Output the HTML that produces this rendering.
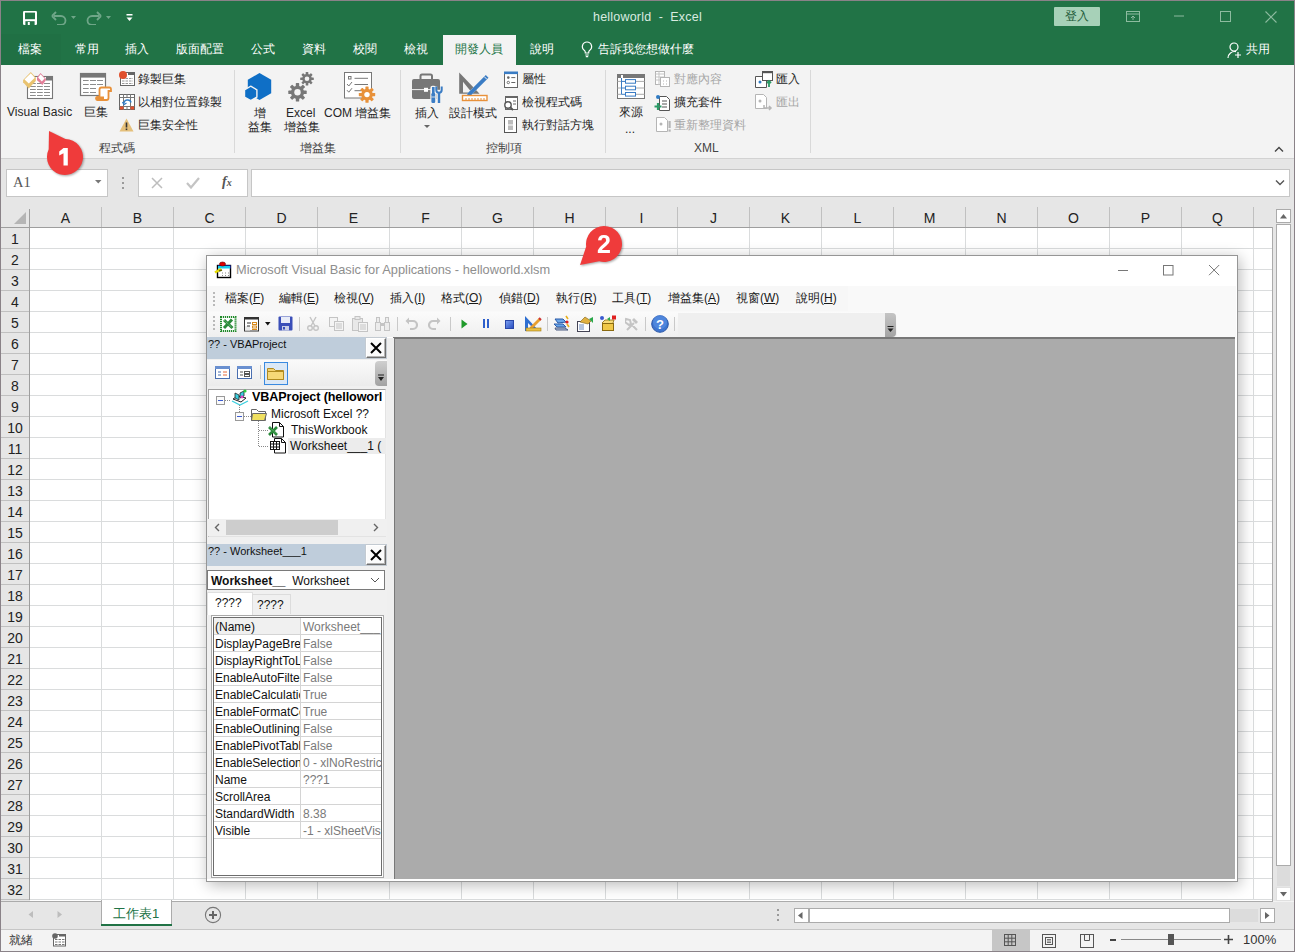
<!DOCTYPE html><html><head><meta charset="utf-8"><style>
*{margin:0;padding:0;box-sizing:border-box}
html,body{width:1295px;height:952px;overflow:hidden;background:#f3f3f3}
body{font-family:"Liberation Sans",sans-serif;position:relative;color:#222}
.a{position:absolute}
.t{position:absolute;white-space:pre;line-height:1}
</style></head><body><div class="a" style="left:0px;top:0px;width:1295px;height:65px;background:#217346"></div>
<svg class="a" style="left:23px;top:11px;" width="15" height="15" viewBox="0 0 15 15"><rect x="0" y="0" width="14" height="14" rx="1.2" fill="#fff"/><rect x="2" y="1.6" width="10" height="6.6" fill="#217346"/><rect x="2.4" y="10.2" width="9.2" height="3.8" fill="#217346"/><rect x="4.8" y="11" width="2" height="3" fill="#fff"/></svg>
<svg class="a" style="left:51px;top:11px;" width="16" height="14" viewBox="0 0 16 14"><path d="M3 5h7a4.5 4.5 0 0 1 0 9H6" fill="none" stroke="#6fa688" stroke-width="1.8"/><path d="M1 5l4-4M1 5l4 4" fill="none" stroke="#6fa688" stroke-width="1.8"/></svg>
<svg class="a" style="left:71px;top:16px;" width="6" height="4" viewBox="0 0 6 4"><path d="M0 0h5l-2.5 3z" fill="#6fa688"/></svg>
<svg class="a" style="left:86px;top:11px;" width="16" height="14" viewBox="0 0 16 14"><path d="M13 5H6a4.5 4.5 0 0 0 0 9h4" fill="none" stroke="#6fa688" stroke-width="1.8"/><path d="M15 5l-4-4M15 5l-4 4" fill="none" stroke="#6fa688" stroke-width="1.8"/></svg>
<svg class="a" style="left:106px;top:16px;" width="6" height="4" viewBox="0 0 6 4"><path d="M0 0h5l-2.5 3z" fill="#6fa688"/></svg>
<svg class="a" style="left:126px;top:14px;" width="7" height="8" viewBox="0 0 7 8"><rect x="0.5" y="0" width="6" height="1.5" fill="#fff"/><path d="M0.5 3.5h6l-3 3.5z" fill="#fff"/></svg>
<div class="t" style="left:593px;top:11px;font-size:12.5px;color:#d9ebe0;letter-spacing:0.2px">helloworld  -  Excel</div>
<div class="a" style="left:1054px;top:7px;width:46px;height:19px;background:#a7d1b8;border-radius:1px"></div>
<div class="t" style="left:1065px;top:10px;font-size:12px;color:#1e5a39;">登入</div>
<svg class="a" style="left:1126px;top:11px;" width="14" height="11" viewBox="0 0 14 11"><rect x="0.5" y="0.5" width="13" height="10" fill="none" stroke="#8dbb9f"/><path d="M0.5 3h13" stroke="#8dbb9f"/><path d="M7 9V5M5 7l2-2 2 2" fill="none" stroke="#8dbb9f"/></svg>
<svg class="a" style="left:1174px;top:15px;" width="11" height="2" viewBox="0 0 11 2"><path d="M0 1h10" stroke="#8dbb9f" stroke-width="1"/></svg>
<svg class="a" style="left:1220px;top:11px;" width="11" height="11" viewBox="0 0 11 11"><rect x="0.5" y="0.5" width="10" height="10" fill="none" stroke="#8dbb9f"/></svg>
<svg class="a" style="left:1265px;top:11px;" width="12" height="12" viewBox="0 0 12 12"><path d="M0.5 0.5l11 11M11.5 0.5l-11 11" stroke="#8dbb9f" stroke-width="1.1"/></svg>
<div class="a" style="left:1px;top:34px;width:60px;height:31px;background:#207044"></div>
<div class="t" style="left:18px;top:43px;font-size:12px;color:#fff;">檔案</div>
<div class="t" style="left:75px;top:43px;font-size:12px;color:#fff;">常用</div>
<div class="t" style="left:125px;top:43px;font-size:12px;color:#fff;">插入</div>
<div class="t" style="left:176px;top:43px;font-size:12px;color:#fff;">版面配置</div>
<div class="t" style="left:251px;top:43px;font-size:12px;color:#fff;">公式</div>
<div class="t" style="left:302px;top:43px;font-size:12px;color:#fff;">資料</div>
<div class="t" style="left:353px;top:43px;font-size:12px;color:#fff;">校閱</div>
<div class="t" style="left:404px;top:43px;font-size:12px;color:#fff;">檢視</div>
<div class="t" style="left:530px;top:43px;font-size:12px;color:#fff;">說明</div>
<div class="a" style="left:443px;top:35px;width:73px;height:30px;background:#f3f3f3"></div>
<div class="t" style="left:455px;top:43px;font-size:12px;color:#217346;">開發人員</div>
<svg class="a" style="left:581px;top:41px;" width="12" height="17" viewBox="0 0 12 17"><path d="M6 1a4.6 4.6 0 0 0-2.6 8.4c.6.5.9 1.2.9 2V12h3.4v-.6c0-.8.3-1.5.9-2A4.6 4.6 0 0 0 6 1z" fill="none" stroke="#fff" stroke-width="1.2"/><path d="M4.3 14h3.4M4.8 15.6h2.4" stroke="#fff" stroke-width="1.1"/></svg>
<div class="t" style="left:598px;top:43px;font-size:12px;color:#fff;">告訴我您想做什麼</div>
<svg class="a" style="left:1227px;top:42px;" width="15" height="17" viewBox="0 0 15 17"><circle cx="7" cy="5" r="4" fill="none" stroke="#fff" stroke-width="1.2"/><path d="M1 16a6.5 6.5 0 0 1 8-6.3" fill="none" stroke="#fff" stroke-width="1.2"/><path d="M11 10v6M8 13h6" stroke="#fff" stroke-width="1.2"/></svg>
<div class="t" style="left:1246px;top:43px;font-size:12px;color:#fff;">共用</div>
<div class="a" style="left:1px;top:65px;width:1293px;height:93px;background:#f3f3f3"></div>
<div class="a" style="left:1px;top:158px;width:1293px;height:1px;background:#d2d2d2"></div>
<div class="a" style="left:234px;top:70px;width:1px;height:83px;background:#d9d9d9"></div>
<div class="a" style="left:400px;top:70px;width:1px;height:83px;background:#d9d9d9"></div>
<div class="a" style="left:605px;top:70px;width:1px;height:83px;background:#d9d9d9"></div>
<div class="a" style="left:810px;top:70px;width:1px;height:83px;background:#d9d9d9"></div>
<div class="t" style="left:99px;top:142px;font-size:12px;color:#444;">程式碼</div>
<div class="t" style="left:300px;top:142px;font-size:12px;color:#444;">增益集</div>
<div class="t" style="left:486px;top:142px;font-size:12px;color:#444;">控制項</div>
<div class="t" style="left:694px;top:142px;font-size:12px;color:#444;">XML</div>
<svg class="a" style="left:22px;top:71px;" width="34" height="30" viewBox="0 0 34 30">
<rect x="5.5" y="5.5" width="25" height="22" fill="#fff" stroke="#777" stroke-width="1.1"/>
<rect x="24" y="5" width="7" height="4.5" fill="#777"/>
<path d="M8 12.5h5.8M15 12.5h5.8M22 12.5h6M8 15.5h5.8M15 15.5h5.8M22 15.5h6M8 18.5h5.8M15 18.5h5.8M22 18.5h6M8 21.5h5.8M15 21.5h5.8M22 21.5h6M8 24.5h5.8M15 24.5h5.8M22 24.5h6" stroke="#8c8c8c" stroke-width="1"/>
<path d="M8.8 1L13.8 6.6V10L6.7 17.4L1.1 11.2V9z" fill="#e9c370"/>
<path d="M8.8 2.2L12.8 6.8L6.8 12.6L2.5 8.6z" fill="#fff"/>
<path d="M18.5 2.1L23.9 7.7V9.3L20.4 14L15 9.2V6.2z" fill="#e37f99"/>
<path d="M18.6 3.2L22.6 7.6L19.8 10.6L16.2 6.6z" fill="#fff"/>
</svg>
<div class="t" style="left:7px;top:106px;font-size:12px;color:#262626;">Visual Basic</div>
<svg class="a" style="left:79px;top:72px;" width="34" height="30" viewBox="0 0 34 30">
<rect x="1.5" y="1.5" width="25" height="22" fill="#fff" stroke="#777" stroke-width="1.2"/>
<rect x="1" y="1" width="26" height="4.6" fill="#777"/>
<path d="M4 8.5h5.7M11 8.5h6M18 8.5h6M4 12.5h5.7M11 12.5h6M18 12.5h6M4 16.5h5.7M11 16.5h6M4 20.5h5.7M11 20.5h6" stroke="#8c8c8c"/>
<path d="M20.5 17.5Q20.5 15.5 22.5 15.5H30.5Q32 15.5 32 17.5V19H29.5V26Q29.5 28 27.5 28H18.5Q17 28 17 26.5Q17 24.8 18.5 24.8H20.5z" fill="#fff" stroke="#e8913a" stroke-width="1.8"/>
<path d="M17 25.5Q17 24.5 18.5 24.5H25V28.5H18.5Q17 28.5 17 27z" fill="#e8913a"/>
</svg>
<div class="t" style="left:84px;top:106px;font-size:12px;color:#262626;">巨集</div>
<svg class="a" style="left:119px;top:71px;" width="16" height="16" viewBox="0 0 16 16"><rect x="1.5" y="1.5" width="14" height="13" fill="#fff" stroke="#666"/><rect x="9" y="1" width="7" height="3" fill="#666"/>
<path d="M3 7.5h11M3 10h11M3 12.5h11" stroke="#999" stroke-dasharray="2.5 1"/><circle cx="4" cy="4" r="4" fill="#e0502e"/></svg>
<div class="t" style="left:138px;top:73px;font-size:12px;color:#262626;">錄製巨集</div>
<svg class="a" style="left:119px;top:94px;" width="16" height="17" viewBox="0 0 16 17"><rect x="0.5" y="0.5" width="15" height="15" fill="#fff" stroke="#666"/>
<path d="M0.5 3.5h15M0.5 12.5h15M4.5 0v16M8 0v4M8 12v4M11.5 0v16" stroke="#777"/>
<path d="M5 9.5a3.5 3 0 0 1 7-1" fill="none" stroke="#2f7bc4" stroke-width="1.5"/><path d="M3.5 8l1.5 2.5 2.5-1.5" fill="none" stroke="#2f7bc4" stroke-width="1.3"/>
<rect x="1" y="12.5" width="3.5" height="3" fill="#e0502e"/><rect x="11.5" y="12.5" width="3.5" height="3" fill="#e0502e"/></svg>
<div class="t" style="left:138px;top:96px;font-size:12px;color:#262626;">以相對位置錄製</div>
<svg class="a" style="left:119px;top:118px;" width="15" height="14" viewBox="0 0 15 14"><path d="M7.5 0.5L14.5 13.5H0.5z" fill="#e5c07b"/><rect x="6.7" y="4.5" width="1.6" height="5" fill="#333"/><rect x="6.7" y="10.5" width="1.6" height="1.6" fill="#333"/></svg>
<div class="t" style="left:138px;top:119px;font-size:12px;color:#262626;">巨集安全性</div>
<svg class="a" style="left:244px;top:72px;" width="28" height="29" viewBox="0 0 28 29"><path d="M15.5 1l11.7 6.75v13.5L15.5 28 3.8 21.25V7.75z" fill="#0f6fc6"/>
<path d="M6.7 14.2l6.2 3.6v7.2L6.7 28.6 0.5 25v-7.2z" fill="#0f6fc6" stroke="#f3f3f3" stroke-width="1.4"/></svg>
<div class="t" style="left:254px;top:107px;font-size:12px;color:#262626;">增</div>
<div class="t" style="left:248px;top:121px;font-size:12px;color:#262626;">益集</div>
<svg class="a" style="left:287px;top:70px;" width="30" height="32" viewBox="0 0 30 32"><circle cx="10.5" cy="22.3" r="6.6" fill="#777"/><rect x="8.8" y="13.100000000000001" width="3.4" height="3.6" rx="0.6" fill="#777" transform="rotate(0.0 10.5 22.3)"/><rect x="8.8" y="13.100000000000001" width="3.4" height="3.6" rx="0.6" fill="#777" transform="rotate(45.0 10.5 22.3)"/><rect x="8.8" y="13.100000000000001" width="3.4" height="3.6" rx="0.6" fill="#777" transform="rotate(90.0 10.5 22.3)"/><rect x="8.8" y="13.100000000000001" width="3.4" height="3.6" rx="0.6" fill="#777" transform="rotate(135.0 10.5 22.3)"/><rect x="8.8" y="13.100000000000001" width="3.4" height="3.6" rx="0.6" fill="#777" transform="rotate(180.0 10.5 22.3)"/><rect x="8.8" y="13.100000000000001" width="3.4" height="3.6" rx="0.6" fill="#777" transform="rotate(225.0 10.5 22.3)"/><rect x="8.8" y="13.100000000000001" width="3.4" height="3.6" rx="0.6" fill="#777" transform="rotate(270.0 10.5 22.3)"/><rect x="8.8" y="13.100000000000001" width="3.4" height="3.6" rx="0.6" fill="#777" transform="rotate(315.0 10.5 22.3)"/><circle cx="10.5" cy="22.3" r="3.2" fill="#f3f3f3"/><circle cx="20" cy="8.7" r="4.8" fill="#777"/><rect x="18.7" y="1.8999999999999995" width="2.6" height="3" rx="0.6" fill="#777" transform="rotate(0.0 20 8.7)"/><rect x="18.7" y="1.8999999999999995" width="2.6" height="3" rx="0.6" fill="#777" transform="rotate(45.0 20 8.7)"/><rect x="18.7" y="1.8999999999999995" width="2.6" height="3" rx="0.6" fill="#777" transform="rotate(90.0 20 8.7)"/><rect x="18.7" y="1.8999999999999995" width="2.6" height="3" rx="0.6" fill="#777" transform="rotate(135.0 20 8.7)"/><rect x="18.7" y="1.8999999999999995" width="2.6" height="3" rx="0.6" fill="#777" transform="rotate(180.0 20 8.7)"/><rect x="18.7" y="1.8999999999999995" width="2.6" height="3" rx="0.6" fill="#777" transform="rotate(225.0 20 8.7)"/><rect x="18.7" y="1.8999999999999995" width="2.6" height="3" rx="0.6" fill="#777" transform="rotate(270.0 20 8.7)"/><rect x="18.7" y="1.8999999999999995" width="2.6" height="3" rx="0.6" fill="#777" transform="rotate(315.0 20 8.7)"/><circle cx="20" cy="8.7" r="2.3" fill="#f3f3f3"/></svg>
<div class="t" style="left:286px;top:107px;font-size:12px;color:#262626;">Excel</div>
<div class="t" style="left:284px;top:121px;font-size:12px;color:#262626;">增益集</div>
<svg class="a" style="left:343px;top:71px;" width="34" height="32" viewBox="0 0 34 32"><rect x="1.5" y="1.5" width="27" height="25.5" fill="#fff" stroke="#777"/><rect x="5.5" y="5.5" width="2.5" height="2.5" fill="none" stroke="#777"/><path d="M11.5 7.3h13.5M11.5 13.5h13.5M11.5 19.7h6.5" stroke="#777"/><path d="M4 13l1.8 2L9 11M4 19.2l1.8 2L9 17.2" fill="none" stroke="#777"/><circle cx="24" cy="23.6" r="5.8" fill="#e8913a"/><rect x="22.4" y="15.4" width="3.2" height="3.4" rx="0.6" fill="#e8913a" transform="rotate(0.0 24 23.6)"/><rect x="22.4" y="15.4" width="3.2" height="3.4" rx="0.6" fill="#e8913a" transform="rotate(45.0 24 23.6)"/><rect x="22.4" y="15.4" width="3.2" height="3.4" rx="0.6" fill="#e8913a" transform="rotate(90.0 24 23.6)"/><rect x="22.4" y="15.4" width="3.2" height="3.4" rx="0.6" fill="#e8913a" transform="rotate(135.0 24 23.6)"/><rect x="22.4" y="15.4" width="3.2" height="3.4" rx="0.6" fill="#e8913a" transform="rotate(180.0 24 23.6)"/><rect x="22.4" y="15.4" width="3.2" height="3.4" rx="0.6" fill="#e8913a" transform="rotate(225.0 24 23.6)"/><rect x="22.4" y="15.4" width="3.2" height="3.4" rx="0.6" fill="#e8913a" transform="rotate(270.0 24 23.6)"/><rect x="22.4" y="15.4" width="3.2" height="3.4" rx="0.6" fill="#e8913a" transform="rotate(315.0 24 23.6)"/><circle cx="24" cy="23.6" r="2.7" fill="#fff"/></svg>
<div class="t" style="left:324px;top:107px;font-size:12px;color:#262626;">COM 增益集</div>
<svg class="a" style="left:411px;top:72px;" width="34" height="33" viewBox="0 0 34 33"><path d="M9.5 7.5V4Q9.5 2.5 11 2.5H19.5Q21 2.5 21 4V7.5" fill="none" stroke="#777" stroke-width="2"/>
<rect x="1" y="7" width="28" height="20" rx="2" fill="#777"/>
<path d="M1 17.6H21" stroke="#f3f3f3" stroke-width="1"/><rect x="13" y="15.8" width="4" height="4" fill="#fff"/>
<g stroke="#f3f3f3" stroke-width="2.4" fill="#f3f3f3"><rect x="20.5" y="15" width="3.5" height="16" rx="1"/><rect x="26.5" y="19" width="3" height="12"/><path d="M25 14.5V18Q25 21 28 21Q31 21 31 18V14.5" fill="none"/></g>
<rect x="21" y="15" width="2.6" height="8" fill="#3a7cc4"/><rect x="20.4" y="21" width="3.8" height="10" rx="1.2" fill="#3a7cc4"/><path d="M20.4 25h3.8" stroke="#f3f3f3" stroke-width="0.8"/>
<rect x="26.8" y="20" width="2.4" height="11" fill="#3a7cc4"/><path d="M25.3 14.5V18Q25.3 20.7 28 20.7Q30.7 20.7 30.7 18V14.5" fill="none" stroke="#3a7cc4" stroke-width="2"/>
</svg>
<div class="t" style="left:415px;top:107px;font-size:12px;color:#262626;">插入</div>
<svg class="a" style="left:424px;top:125px;" width="7" height="4" viewBox="0 0 7 4"><path d="M0 0h6l-3 3z" fill="#666"/></svg>
<svg class="a" style="left:458px;top:70px;" width="32" height="32" viewBox="0 0 32 32"><path d="M1.2 2.5V23.8H21.6z" fill="#777"/><path d="M5 11.8V22.4H13.7z" fill="#f3f3f3"/>
<path d="M9 23.8L28.5 4.3 31.2 7 11.7 26.5 7.8 27.8z" fill="#f3f3f3"/>
<path d="M9.6 23.2L27.8 5 30.5 7.7 12.3 25.9 8.8 26.8z" fill="#3a7cc4"/><path d="M26.2 6.6l2.7 2.7" stroke="#f3f3f3" stroke-width="1"/>
<rect x="4.5" y="25.5" width="24.5" height="5" fill="#fff" stroke="#e8913a" stroke-width="1.4"/><path d="M8 30v-2M11 30v-2M14 30v-2M17 30v-2M20 30v-2M23 30v-2M26 30v-2" stroke="#e8913a" stroke-width="1"/>
</svg>
<div class="t" style="left:449px;top:107px;font-size:12px;color:#262626;">設計模式</div>
<svg class="a" style="left:503px;top:71px;" width="15" height="17" viewBox="0 0 15 17"><rect x="1.5" y="1.5" width="13" height="15" fill="#fff" stroke="#666"/><rect x="1" y="0.5" width="14" height="2.6" fill="#3a7cc4"/><circle cx="5.3" cy="6.6" r="1.3" fill="#666"/><circle cx="5.3" cy="11.5" r="1.2" fill="none" stroke="#666" stroke-width="0.9"/><path d="M8.3 6.6h4M8.3 11.5h4" stroke="#666"/></svg>
<div class="t" style="left:522px;top:73px;font-size:12px;color:#262626;">屬性</div>
<svg class="a" style="left:502px;top:94px;" width="16" height="17" viewBox="0 0 16 17"><rect x="3.5" y="2.5" width="12" height="13" fill="#fff" stroke="#666"/><rect x="3" y="2" width="13" height="2" fill="#666"/><path d="M11 7h3M11 10h3" stroke="#666"/><circle cx="6" cy="11" r="3.2" fill="#fff" stroke="#555" stroke-width="1.4"/><path d="M8 13l3 3" stroke="#555" stroke-width="1.8"/></svg>
<div class="t" style="left:522px;top:96px;font-size:12px;color:#262626;">檢視程式碼</div>
<svg class="a" style="left:503px;top:117px;" width="15" height="17" viewBox="0 0 15 17"><rect x="1.5" y="0.5" width="12" height="15" fill="#fff" stroke="#555"/><rect x="5" y="3" width="5" height="10" fill="#bbb"/><path d="M5 8h5" stroke="#fff"/></svg>
<div class="t" style="left:522px;top:119px;font-size:12px;color:#262626;">執行對話方塊</div>
<svg class="a" style="left:616px;top:73px;" width="30" height="29" viewBox="0 0 30 29"><rect x="1.5" y="1.5" width="27" height="24" fill="#fff" stroke="#777"/><rect x="7" y="1" width="22" height="4" fill="#777"/><rect x="1" y="1" width="4" height="4" fill="#777"/>
<path d="M1.5 8.4h4M1.5 15h4M1.5 21.3h4M19.5 8.4h9M19.5 15h9M19.5 21.3h9" stroke="#aaa"/>
<path d="M5.5 5v16.3M5.5 8.4h4M5.5 15h4M5.5 21.3h4" stroke="#3a7cc4" fill="none"/>
<rect x="9.5" y="6.6" width="10" height="3.6" fill="#fff" stroke="#3a7cc4"/><rect x="9.5" y="13.2" width="10" height="3.6" fill="#fff" stroke="#3a7cc4"/><rect x="9.5" y="19.5" width="10" height="3.6" fill="#fff" stroke="#3a7cc4"/>
</svg>
<div class="t" style="left:619px;top:106px;font-size:12px;color:#262626;">來源</div>
<div class="t" style="left:625px;top:123px;font-size:12px;color:#262626;">...</div>
<svg class="a" style="left:655px;top:71px;" width="15" height="16" viewBox="0 0 15 16"><rect x="0.5" y="0.5" width="9" height="13" fill="#fff" stroke="#b5b5b5"/><path d="M0.5 3h9M0.5 6h9M0.5 9h9M4 0v14" stroke="#c5c5c5"/><rect x="5.5" y="6.5" width="9" height="9" fill="#fff" stroke="#b5b5b5"/><path d="M8 10h1M11 10h1M8 13h1M11 13h1" stroke="#b5b5b5"/></svg>
<div class="t" style="left:674px;top:73px;font-size:12px;color:#a6a6a6;">對應內容</div>
<svg class="a" style="left:654px;top:94px;" width="17" height="17" viewBox="0 0 17 17"><path d="M5.5 2.5h7l3 3v11h-10z" fill="#fff" stroke="#555"/><path d="M8 7h5M8 10h5M8 13h5" stroke="#555"/><circle cx="4" cy="3" r="2" fill="#2f7bc4"/><path d="M4 9v7M0.5 12.5h7" stroke="#2b9a66" stroke-width="2.2"/></svg>
<div class="t" style="left:674px;top:96px;font-size:12px;color:#262626;">擴充套件</div>
<svg class="a" style="left:656px;top:117px;" width="16" height="16" viewBox="0 0 16 16"><path d="M0.5 0.5h8l3 3v11h-11z" fill="#fff" stroke="#b5b5b5"/><circle cx="5" cy="7" r="1.5" fill="#b5b5b5"/><rect x="12.5" y="4" width="2.2" height="7" fill="#b5b5b5"/><rect x="12.5" y="12.5" width="2.2" height="2.2" fill="#b5b5b5"/></svg>
<div class="t" style="left:674px;top:119px;font-size:12px;color:#a6a6a6;">重新整理資料</div>
<svg class="a" style="left:755px;top:71px;" width="18" height="17" viewBox="0 0 18 17"><path d="M0.5 5.5h8l3 3v8h-11z" fill="#fff" stroke="#555"/><circle cx="5" cy="11" r="1.5" fill="#2f7bc4"/><rect x="7.5" y="0.5" width="10" height="9" fill="#fff" stroke="#555"/><rect x="7" y="0" width="11" height="2.2" fill="#555"/><path d="M14 16V10M12 12l2-2 2 2" stroke="#2b9a66" stroke-width="1.8" fill="none"/></svg>
<div class="t" style="left:776px;top:73px;font-size:12px;color:#262626;">匯入</div>
<svg class="a" style="left:755px;top:94px;" width="18" height="17" viewBox="0 0 18 17"><path d="M0.5 0.5h8l3 3v11h-11z" fill="#fff" stroke="#b5b5b5"/><circle cx="5" cy="7" r="1.5" fill="#b5b5b5"/><path d="M9 11v3h7M14 12l2 2-2 2" stroke="#b5b5b5" stroke-width="1.5" fill="none"/></svg>
<div class="t" style="left:776px;top:96px;font-size:12px;color:#a6a6a6;">匯出</div>
<svg class="a" style="left:1274px;top:146px;" width="10" height="7" viewBox="0 0 10 7"><path d="M1 5.5l4-4 4 4" fill="none" stroke="#444" stroke-width="1.4"/></svg>
<div class="a" style="left:1px;top:159px;width:1293px;height:48px;background:#e6e6e6"></div>
<div class="a" style="left:6px;top:169px;width:102px;height:28px;background:#fff;border:1px solid #c6c6c6"></div>
<div class="t" style="left:13px;top:175px;font-size:14.5px;color:#555;font-family:Liberation Serif,serif">A1</div>
<svg class="a" style="left:95px;top:180px;" width="7" height="4" viewBox="0 0 7 4"><path d="M0 0h6.5l-3.25 3.5z" fill="#777"/></svg>
<div class="a" style="left:122px;top:177px;width:2px;height:2px;background:#9a9a9a"></div>
<div class="a" style="left:122px;top:182px;width:2px;height:2px;background:#9a9a9a"></div>
<div class="a" style="left:122px;top:187px;width:2px;height:2px;background:#9a9a9a"></div>
<div class="a" style="left:138px;top:169px;width:110px;height:28px;background:#fff;border:1px solid #c6c6c6"></div>
<svg class="a" style="left:151px;top:177px;" width="12" height="12" viewBox="0 0 12 12"><path d="M1 1l10 10M11 1L1 11" stroke="#bdbdbd" stroke-width="1.5"/></svg>
<svg class="a" style="left:186px;top:177px;" width="14" height="12" viewBox="0 0 14 12"><path d="M1 6l4 4.5L13 1" fill="none" stroke="#c4c4c4" stroke-width="2.2"/></svg>
<div class="t" style="left:222px;top:175px;font-size:14px;color:#555;font-family:Liberation Serif,serif;font-weight:bold"><i>f</i><span style="font-size:10px"><i>x</i></span></div>
<div class="a" style="left:251px;top:169px;width:1039px;height:28px;background:#fff;border:1px solid #c6c6c6"></div>
<svg class="a" style="left:1275px;top:179px;" width="10" height="7" viewBox="0 0 10 7"><path d="M1 1.5l4 4 4-4" fill="none" stroke="#555" stroke-width="1.4"/></svg>
<div class="a" style="left:1px;top:207px;width:1293px;height:694px;background:#e6e6e6"></div>
<div class="a" style="left:1px;top:228px;width:29px;height:672px;background:#e6e6e6"></div>
<div class="a" style="left:30px;top:228px;width:1242px;height:673px;background:#fff"></div>
<svg class="a" style="left:13px;top:212px;" width="14" height="13" viewBox="0 0 14 13"><path d="M13 0v12H1z" fill="#b5b5b5"/></svg>
<div class="a" style="left:101px;top:228px;width:1px;height:672px;background:#dadcdd"></div><div class="a" style="left:101px;top:207px;width:1px;height:20px;background:#c0c0c0"></div><div class="a" style="left:173px;top:228px;width:1px;height:672px;background:#dadcdd"></div><div class="a" style="left:173px;top:207px;width:1px;height:20px;background:#c0c0c0"></div><div class="a" style="left:245px;top:228px;width:1px;height:672px;background:#dadcdd"></div><div class="a" style="left:245px;top:207px;width:1px;height:20px;background:#c0c0c0"></div><div class="a" style="left:317px;top:228px;width:1px;height:672px;background:#dadcdd"></div><div class="a" style="left:317px;top:207px;width:1px;height:20px;background:#c0c0c0"></div><div class="a" style="left:389px;top:228px;width:1px;height:672px;background:#dadcdd"></div><div class="a" style="left:389px;top:207px;width:1px;height:20px;background:#c0c0c0"></div><div class="a" style="left:461px;top:228px;width:1px;height:672px;background:#dadcdd"></div><div class="a" style="left:461px;top:207px;width:1px;height:20px;background:#c0c0c0"></div><div class="a" style="left:533px;top:228px;width:1px;height:672px;background:#dadcdd"></div><div class="a" style="left:533px;top:207px;width:1px;height:20px;background:#c0c0c0"></div><div class="a" style="left:605px;top:228px;width:1px;height:672px;background:#dadcdd"></div><div class="a" style="left:605px;top:207px;width:1px;height:20px;background:#c0c0c0"></div><div class="a" style="left:677px;top:228px;width:1px;height:672px;background:#dadcdd"></div><div class="a" style="left:677px;top:207px;width:1px;height:20px;background:#c0c0c0"></div><div class="a" style="left:749px;top:228px;width:1px;height:672px;background:#dadcdd"></div><div class="a" style="left:749px;top:207px;width:1px;height:20px;background:#c0c0c0"></div><div class="a" style="left:821px;top:228px;width:1px;height:672px;background:#dadcdd"></div><div class="a" style="left:821px;top:207px;width:1px;height:20px;background:#c0c0c0"></div><div class="a" style="left:893px;top:228px;width:1px;height:672px;background:#dadcdd"></div><div class="a" style="left:893px;top:207px;width:1px;height:20px;background:#c0c0c0"></div><div class="a" style="left:965px;top:228px;width:1px;height:672px;background:#dadcdd"></div><div class="a" style="left:965px;top:207px;width:1px;height:20px;background:#c0c0c0"></div><div class="a" style="left:1037px;top:228px;width:1px;height:672px;background:#dadcdd"></div><div class="a" style="left:1037px;top:207px;width:1px;height:20px;background:#c0c0c0"></div><div class="a" style="left:1109px;top:228px;width:1px;height:672px;background:#dadcdd"></div><div class="a" style="left:1109px;top:207px;width:1px;height:20px;background:#c0c0c0"></div><div class="a" style="left:1181px;top:228px;width:1px;height:672px;background:#dadcdd"></div><div class="a" style="left:1181px;top:207px;width:1px;height:20px;background:#c0c0c0"></div><div class="a" style="left:1253px;top:228px;width:1px;height:672px;background:#dadcdd"></div><div class="a" style="left:1253px;top:207px;width:1px;height:20px;background:#c0c0c0"></div><div class="a" style="left:30px;top:248px;width:1242px;height:1px;background:#dadcdd"></div><div class="a" style="left:1px;top:248px;width:28px;height:1px;background:#c0c0c0"></div><div class="a" style="left:30px;top:269px;width:1242px;height:1px;background:#dadcdd"></div><div class="a" style="left:1px;top:269px;width:28px;height:1px;background:#c0c0c0"></div><div class="a" style="left:30px;top:290px;width:1242px;height:1px;background:#dadcdd"></div><div class="a" style="left:1px;top:290px;width:28px;height:1px;background:#c0c0c0"></div><div class="a" style="left:30px;top:311px;width:1242px;height:1px;background:#dadcdd"></div><div class="a" style="left:1px;top:311px;width:28px;height:1px;background:#c0c0c0"></div><div class="a" style="left:30px;top:332px;width:1242px;height:1px;background:#dadcdd"></div><div class="a" style="left:1px;top:332px;width:28px;height:1px;background:#c0c0c0"></div><div class="a" style="left:30px;top:353px;width:1242px;height:1px;background:#dadcdd"></div><div class="a" style="left:1px;top:353px;width:28px;height:1px;background:#c0c0c0"></div><div class="a" style="left:30px;top:374px;width:1242px;height:1px;background:#dadcdd"></div><div class="a" style="left:1px;top:374px;width:28px;height:1px;background:#c0c0c0"></div><div class="a" style="left:30px;top:395px;width:1242px;height:1px;background:#dadcdd"></div><div class="a" style="left:1px;top:395px;width:28px;height:1px;background:#c0c0c0"></div><div class="a" style="left:30px;top:416px;width:1242px;height:1px;background:#dadcdd"></div><div class="a" style="left:1px;top:416px;width:28px;height:1px;background:#c0c0c0"></div><div class="a" style="left:30px;top:437px;width:1242px;height:1px;background:#dadcdd"></div><div class="a" style="left:1px;top:437px;width:28px;height:1px;background:#c0c0c0"></div><div class="a" style="left:30px;top:458px;width:1242px;height:1px;background:#dadcdd"></div><div class="a" style="left:1px;top:458px;width:28px;height:1px;background:#c0c0c0"></div><div class="a" style="left:30px;top:479px;width:1242px;height:1px;background:#dadcdd"></div><div class="a" style="left:1px;top:479px;width:28px;height:1px;background:#c0c0c0"></div><div class="a" style="left:30px;top:500px;width:1242px;height:1px;background:#dadcdd"></div><div class="a" style="left:1px;top:500px;width:28px;height:1px;background:#c0c0c0"></div><div class="a" style="left:30px;top:521px;width:1242px;height:1px;background:#dadcdd"></div><div class="a" style="left:1px;top:521px;width:28px;height:1px;background:#c0c0c0"></div><div class="a" style="left:30px;top:542px;width:1242px;height:1px;background:#dadcdd"></div><div class="a" style="left:1px;top:542px;width:28px;height:1px;background:#c0c0c0"></div><div class="a" style="left:30px;top:563px;width:1242px;height:1px;background:#dadcdd"></div><div class="a" style="left:1px;top:563px;width:28px;height:1px;background:#c0c0c0"></div><div class="a" style="left:30px;top:584px;width:1242px;height:1px;background:#dadcdd"></div><div class="a" style="left:1px;top:584px;width:28px;height:1px;background:#c0c0c0"></div><div class="a" style="left:30px;top:605px;width:1242px;height:1px;background:#dadcdd"></div><div class="a" style="left:1px;top:605px;width:28px;height:1px;background:#c0c0c0"></div><div class="a" style="left:30px;top:626px;width:1242px;height:1px;background:#dadcdd"></div><div class="a" style="left:1px;top:626px;width:28px;height:1px;background:#c0c0c0"></div><div class="a" style="left:30px;top:647px;width:1242px;height:1px;background:#dadcdd"></div><div class="a" style="left:1px;top:647px;width:28px;height:1px;background:#c0c0c0"></div><div class="a" style="left:30px;top:668px;width:1242px;height:1px;background:#dadcdd"></div><div class="a" style="left:1px;top:668px;width:28px;height:1px;background:#c0c0c0"></div><div class="a" style="left:30px;top:689px;width:1242px;height:1px;background:#dadcdd"></div><div class="a" style="left:1px;top:689px;width:28px;height:1px;background:#c0c0c0"></div><div class="a" style="left:30px;top:710px;width:1242px;height:1px;background:#dadcdd"></div><div class="a" style="left:1px;top:710px;width:28px;height:1px;background:#c0c0c0"></div><div class="a" style="left:30px;top:731px;width:1242px;height:1px;background:#dadcdd"></div><div class="a" style="left:1px;top:731px;width:28px;height:1px;background:#c0c0c0"></div><div class="a" style="left:30px;top:752px;width:1242px;height:1px;background:#dadcdd"></div><div class="a" style="left:1px;top:752px;width:28px;height:1px;background:#c0c0c0"></div><div class="a" style="left:30px;top:773px;width:1242px;height:1px;background:#dadcdd"></div><div class="a" style="left:1px;top:773px;width:28px;height:1px;background:#c0c0c0"></div><div class="a" style="left:30px;top:794px;width:1242px;height:1px;background:#dadcdd"></div><div class="a" style="left:1px;top:794px;width:28px;height:1px;background:#c0c0c0"></div><div class="a" style="left:30px;top:815px;width:1242px;height:1px;background:#dadcdd"></div><div class="a" style="left:1px;top:815px;width:28px;height:1px;background:#c0c0c0"></div><div class="a" style="left:30px;top:836px;width:1242px;height:1px;background:#dadcdd"></div><div class="a" style="left:1px;top:836px;width:28px;height:1px;background:#c0c0c0"></div><div class="a" style="left:30px;top:857px;width:1242px;height:1px;background:#dadcdd"></div><div class="a" style="left:1px;top:857px;width:28px;height:1px;background:#c0c0c0"></div><div class="a" style="left:30px;top:878px;width:1242px;height:1px;background:#dadcdd"></div><div class="a" style="left:1px;top:878px;width:28px;height:1px;background:#c0c0c0"></div><div class="a" style="left:30px;top:899px;width:1242px;height:1px;background:#dadcdd"></div><div class="a" style="left:1px;top:899px;width:28px;height:1px;background:#c0c0c0"></div>
<div class="a" style="left:29px;top:209px;width:1px;height:691px;background:#9e9e9e"></div>
<div class="a" style="left:1px;top:227px;width:1271px;height:1px;background:#9e9e9e"></div>
<div class="a" style="left:1272px;top:227px;width:1px;height:674px;background:#ababab"></div>
<div class="a" style="left:1px;top:901px;width:1272px;height:1px;background:#ababab"></div>
<div class="t" style="left:30px;top:211px;width:71px;text-align:center;font-size:14px;color:#222">A</div>
<div class="t" style="left:102px;top:211px;width:71px;text-align:center;font-size:14px;color:#222">B</div>
<div class="t" style="left:174px;top:211px;width:71px;text-align:center;font-size:14px;color:#222">C</div>
<div class="t" style="left:246px;top:211px;width:71px;text-align:center;font-size:14px;color:#222">D</div>
<div class="t" style="left:318px;top:211px;width:71px;text-align:center;font-size:14px;color:#222">E</div>
<div class="t" style="left:390px;top:211px;width:71px;text-align:center;font-size:14px;color:#222">F</div>
<div class="t" style="left:462px;top:211px;width:71px;text-align:center;font-size:14px;color:#222">G</div>
<div class="t" style="left:534px;top:211px;width:71px;text-align:center;font-size:14px;color:#222">H</div>
<div class="t" style="left:606px;top:211px;width:71px;text-align:center;font-size:14px;color:#222">I</div>
<div class="t" style="left:678px;top:211px;width:71px;text-align:center;font-size:14px;color:#222">J</div>
<div class="t" style="left:750px;top:211px;width:71px;text-align:center;font-size:14px;color:#222">K</div>
<div class="t" style="left:822px;top:211px;width:71px;text-align:center;font-size:14px;color:#222">L</div>
<div class="t" style="left:894px;top:211px;width:71px;text-align:center;font-size:14px;color:#222">M</div>
<div class="t" style="left:966px;top:211px;width:71px;text-align:center;font-size:14px;color:#222">N</div>
<div class="t" style="left:1038px;top:211px;width:71px;text-align:center;font-size:14px;color:#222">O</div>
<div class="t" style="left:1110px;top:211px;width:71px;text-align:center;font-size:14px;color:#222">P</div>
<div class="t" style="left:1182px;top:211px;width:71px;text-align:center;font-size:14px;color:#222">Q</div>
<div class="t" style="left:1px;top:232px;width:28px;text-align:center;font-size:14px;color:#222">1</div>
<div class="t" style="left:1px;top:253px;width:28px;text-align:center;font-size:14px;color:#222">2</div>
<div class="t" style="left:1px;top:274px;width:28px;text-align:center;font-size:14px;color:#222">3</div>
<div class="t" style="left:1px;top:295px;width:28px;text-align:center;font-size:14px;color:#222">4</div>
<div class="t" style="left:1px;top:316px;width:28px;text-align:center;font-size:14px;color:#222">5</div>
<div class="t" style="left:1px;top:337px;width:28px;text-align:center;font-size:14px;color:#222">6</div>
<div class="t" style="left:1px;top:358px;width:28px;text-align:center;font-size:14px;color:#222">7</div>
<div class="t" style="left:1px;top:379px;width:28px;text-align:center;font-size:14px;color:#222">8</div>
<div class="t" style="left:1px;top:400px;width:28px;text-align:center;font-size:14px;color:#222">9</div>
<div class="t" style="left:1px;top:421px;width:28px;text-align:center;font-size:14px;color:#222">10</div>
<div class="t" style="left:1px;top:442px;width:28px;text-align:center;font-size:14px;color:#222">11</div>
<div class="t" style="left:1px;top:463px;width:28px;text-align:center;font-size:14px;color:#222">12</div>
<div class="t" style="left:1px;top:484px;width:28px;text-align:center;font-size:14px;color:#222">13</div>
<div class="t" style="left:1px;top:505px;width:28px;text-align:center;font-size:14px;color:#222">14</div>
<div class="t" style="left:1px;top:526px;width:28px;text-align:center;font-size:14px;color:#222">15</div>
<div class="t" style="left:1px;top:547px;width:28px;text-align:center;font-size:14px;color:#222">16</div>
<div class="t" style="left:1px;top:568px;width:28px;text-align:center;font-size:14px;color:#222">17</div>
<div class="t" style="left:1px;top:589px;width:28px;text-align:center;font-size:14px;color:#222">18</div>
<div class="t" style="left:1px;top:610px;width:28px;text-align:center;font-size:14px;color:#222">19</div>
<div class="t" style="left:1px;top:631px;width:28px;text-align:center;font-size:14px;color:#222">20</div>
<div class="t" style="left:1px;top:652px;width:28px;text-align:center;font-size:14px;color:#222">21</div>
<div class="t" style="left:1px;top:673px;width:28px;text-align:center;font-size:14px;color:#222">22</div>
<div class="t" style="left:1px;top:694px;width:28px;text-align:center;font-size:14px;color:#222">23</div>
<div class="t" style="left:1px;top:715px;width:28px;text-align:center;font-size:14px;color:#222">24</div>
<div class="t" style="left:1px;top:736px;width:28px;text-align:center;font-size:14px;color:#222">25</div>
<div class="t" style="left:1px;top:757px;width:28px;text-align:center;font-size:14px;color:#222">26</div>
<div class="t" style="left:1px;top:778px;width:28px;text-align:center;font-size:14px;color:#222">27</div>
<div class="t" style="left:1px;top:799px;width:28px;text-align:center;font-size:14px;color:#222">28</div>
<div class="t" style="left:1px;top:820px;width:28px;text-align:center;font-size:14px;color:#222">29</div>
<div class="t" style="left:1px;top:841px;width:28px;text-align:center;font-size:14px;color:#222">30</div>
<div class="t" style="left:1px;top:862px;width:28px;text-align:center;font-size:14px;color:#222">31</div>
<div class="t" style="left:1px;top:883px;width:28px;text-align:center;font-size:14px;color:#222">32</div>
<div class="a" style="left:1276px;top:209px;width:15px;height:14px;background:#fff;border:1px solid #ababab"></div>
<svg class="a" style="left:1280px;top:214px;" width="8" height="5" viewBox="0 0 8 5"><path d="M0 4.5h7L3.5 0z" fill="#666"/></svg>
<div class="a" style="left:1276px;top:224px;width:15px;height:642px;background:#fff;border:1px solid #ababab"></div>
<div class="a" style="left:1277px;top:866px;width:13px;height:20px;background:#dcdcdc"></div>
<div class="a" style="left:1276px;top:887px;width:15px;height:14px;background:#fff;border:1px solid #e0e0e0"></div>
<svg class="a" style="left:1280px;top:892px;" width="8" height="5" viewBox="0 0 8 5"><path d="M0 0h7L3.5 4.5z" fill="#666"/></svg>
<div class="a" style="left:1px;top:902px;width:1293px;height:27px;background:#e6e6e6"></div>
<div class="a" style="left:1px;top:929px;width:1293px;height:1px;background:#c6c6c6"></div>
<svg class="a" style="left:28px;top:911px;" width="6" height="8" viewBox="0 0 6 8"><path d="M5 0v7L0.5 3.5z" fill="#bdbdbd"/></svg>
<svg class="a" style="left:57px;top:911px;" width="6" height="8" viewBox="0 0 6 8"><path d="M0.5 0v7L5 3.5z" fill="#bdbdbd"/></svg>
<div class="a" style="left:101px;top:900px;width:71px;height:25px;background:#fff;border-left:1px solid #ababab;border-right:1px solid #ababab"></div>
<div class="a" style="left:101px;top:924px;width:71px;height:2px;background:#217346"></div>
<div class="t" style="left:113px;top:907px;font-size:13px;color:#217346;">工作表1</div>
<svg class="a" style="left:204px;top:906px;" width="18" height="18" viewBox="0 0 18 18"><circle cx="9" cy="9" r="7.6" fill="none" stroke="#777" stroke-width="1.1"/><path d="M9 5v8M5 9h8" stroke="#666" stroke-width="2"/></svg>
<div class="a" style="left:777px;top:909px;width:2px;height:2px;background:#9a9a9a"></div>
<div class="a" style="left:777px;top:914px;width:2px;height:2px;background:#9a9a9a"></div>
<div class="a" style="left:777px;top:919px;width:2px;height:2px;background:#9a9a9a"></div>
<div class="a" style="left:794px;top:908px;width:15px;height:15px;background:#fff;border:1px solid #ababab"></div>
<svg class="a" style="left:798px;top:912px;" width="5" height="7" viewBox="0 0 5 7"><path d="M4.5 0v7L0 3.5z" fill="#666"/></svg>
<div class="a" style="left:809px;top:908px;width:421px;height:15px;background:#fff;border:1px solid #ababab"></div>
<div class="a" style="left:1230px;top:909px;width:28px;height:13px;background:#dcdcdc"></div>
<div class="a" style="left:1260px;top:908px;width:15px;height:15px;background:#fff;border:1px solid #ababab"></div>
<svg class="a" style="left:1265px;top:912px;" width="5" height="7" viewBox="0 0 5 7"><path d="M0 0v7L4.5 3.5z" fill="#666"/></svg>
<div class="a" style="left:1px;top:930px;width:1293px;height:21px;background:#f3f3f3"></div>
<div class="t" style="left:9px;top:934px;font-size:12px;color:#333;">就緒</div>
<svg class="a" style="left:52px;top:933px;" width="15" height="14" viewBox="0 0 15 14"><rect x="1.5" y="1.5" width="12" height="11.5" fill="#fff" stroke="#666"/><rect x="7" y="1" width="7" height="2.5" fill="#666"/><path d="M3 6.5h2.5M6.5 6.5h2.5M10 6.5h2.5M3 9h2.5M6.5 9h2.5M10 9h2.5M3 11.5h2.5M6.5 11.5h2.5M10 11.5h2.5" stroke="#777"/><circle cx="3" cy="3" r="2.8" fill="#666"/></svg>
<div class="a" style="left:992px;top:930px;width:38px;height:21px;background:#c6c6c6"></div>
<svg class="a" style="left:1004px;top:934px;" width="12" height="12" viewBox="0 0 12 12"><rect x="0.5" y="0.5" width="11" height="11" fill="none" stroke="#555"/><path d="M4.2 0v12M7.8 0v12M0 4.2h12M0 7.8h12" stroke="#555"/></svg>
<svg class="a" style="left:1042px;top:934px;" width="14" height="14" viewBox="0 0 14 14"><rect x="0.5" y="0.5" width="13" height="13" fill="none" stroke="#555"/><rect x="3.5" y="3.5" width="7" height="7" fill="none" stroke="#555"/><path d="M5 5.5h4M5 7h4M5 8.5h4" stroke="#555" stroke-width="0.8"/></svg>
<svg class="a" style="left:1080px;top:934px;" width="14" height="14" viewBox="0 0 14 14"><rect x="0.5" y="0.5" width="13" height="13" fill="none" stroke="#555"/><path d="M4.5 0.5v6h5v-6" fill="none" stroke="#555"/></svg>
<div class="a" style="left:1110px;top:939px;width:6px;height:2px;background:#444"></div>
<div class="a" style="left:1121px;top:939px;width:100px;height:1px;background:#888"></div>
<div class="a" style="left:1168px;top:934px;width:6px;height:11px;background:#555"></div>
<svg class="a" style="left:1223px;top:934px;" width="11" height="11" viewBox="0 0 11 11"><path d="M5.5 1v9M1 5.5h9" stroke="#444" stroke-width="1.6"/></svg>
<div class="t" style="left:1243px;top:933px;font-size:13px;color:#333;">100%</div>
<div class="a" style="left:206px;top:255px;width:1032px;height:627px;background:#fff;border:1px solid #969696;box-shadow:2px 3px 14px rgba(0,0,0,0.28)"></div>
<svg class="a" style="left:213px;top:261px;" width="20" height="18" viewBox="0 0 20 18"><rect x="4.5" y="4.5" width="13" height="12" fill="#fff" stroke="#000" stroke-width="1.4"/><rect x="5" y="5" width="12" height="2.5" fill="#19d0f0"/><path d="M5 4.5h12.5v3" fill="none" stroke="#1a2a9a" stroke-width="0.8"/><path d="M9 12h1M12 12h1M15 12h1M9 14.5h1M12 14.5h1M15 14.5h1" stroke="#888"/><ellipse cx="9.5" cy="3" rx="3" ry="2" fill="#e00000" stroke="#600" stroke-width="0.6"/><path d="M2 11.5l6-3.5" stroke="#e6dc00" stroke-width="2.6"/><path d="M6 10l3-1" stroke="#6a6a00" stroke-width="1.4"/></svg>
<div class="t" style="left:236px;top:264px;font-size:12.8px;color:#8e8e8e;">Microsoft Visual Basic for Applications - helloworld.xlsm</div>
<svg class="a" style="left:1118px;top:269px;" width="11" height="3" viewBox="0 0 11 3"><path d="M0 1.5h10" stroke="#777"/></svg>
<svg class="a" style="left:1163px;top:265px;" width="11" height="11" viewBox="0 0 11 11"><rect x="0.5" y="0.5" width="9.5" height="9.5" fill="none" stroke="#777"/></svg>
<svg class="a" style="left:1208px;top:264px;" width="12" height="12" viewBox="0 0 12 12"><path d="M1 1l10.2 10.2M11.2 1L1 11.2" stroke="#777"/></svg>
<div class="a" style="left:207px;top:286px;width:1029px;height:51px;background:#f9f9f9"></div>
<div class="a" style="left:207px;top:286px;width:641px;height:25px;background:#f7f7f7"></div>
<div class="a" style="left:213px;top:292px;width:2px;height:2px;background:#b9b9b9"></div>
<div class="a" style="left:213px;top:296px;width:2px;height:2px;background:#b9b9b9"></div>
<div class="a" style="left:213px;top:300px;width:2px;height:2px;background:#b9b9b9"></div>
<div class="a" style="left:213px;top:304px;width:2px;height:2px;background:#b9b9b9"></div>
<div class="t" style="left:225px;top:292px;font-size:12px;color:#1a1a1a;">檔案(<u>F</u>)</div>
<div class="t" style="left:279px;top:292px;font-size:12px;color:#1a1a1a;">編輯(<u>E</u>)</div>
<div class="t" style="left:334px;top:292px;font-size:12px;color:#1a1a1a;">檢視(<u>V</u>)</div>
<div class="t" style="left:390px;top:292px;font-size:12px;color:#1a1a1a;">插入(<u>I</u>)</div>
<div class="t" style="left:441px;top:292px;font-size:12px;color:#1a1a1a;">格式(<u>O</u>)</div>
<div class="t" style="left:499px;top:292px;font-size:12px;color:#1a1a1a;">偵錯(<u>D</u>)</div>
<div class="t" style="left:556px;top:292px;font-size:12px;color:#1a1a1a;">執行(<u>R</u>)</div>
<div class="t" style="left:612px;top:292px;font-size:12px;color:#1a1a1a;">工具(<u>T</u>)</div>
<div class="t" style="left:668px;top:292px;font-size:12px;color:#1a1a1a;">增益集(<u>A</u>)</div>
<div class="t" style="left:736px;top:292px;font-size:12px;color:#1a1a1a;">視窗(<u>W</u>)</div>
<div class="t" style="left:796px;top:292px;font-size:12px;color:#1a1a1a;">說明(<u>H</u>)</div>
<div class="a" style="left:208px;top:312px;width:689px;height:25px;background:linear-gradient(#fbfbfb,#efefef);border-radius:3px"></div>
<div class="a" style="left:213px;top:316px;width:2px;height:2px;background:#b9b9b9"></div>
<div class="a" style="left:213px;top:320px;width:2px;height:2px;background:#b9b9b9"></div>
<div class="a" style="left:213px;top:324px;width:2px;height:2px;background:#b9b9b9"></div>
<div class="a" style="left:213px;top:328px;width:2px;height:2px;background:#b9b9b9"></div>
<svg class="a" style="left:220px;top:316px;" width="17" height="16" viewBox="0 0 17 16"><rect x="1" y="1" width="14.5" height="14" fill="#fff" stroke="#1f8a2a" stroke-width="2" stroke-dasharray="1.2 0.8"/><path d="M4 4l8.5 8M12 3.5l-8 8.5" stroke="#2a8a3a" stroke-width="3"/><path d="M4.5 4.5l7.5 7" stroke="#b8e0b8" stroke-width="0.8" stroke-dasharray="1 1"/></svg>
<svg class="a" style="left:244px;top:317px;" width="15" height="15" viewBox="0 0 15 15"><rect x="0.5" y="0.5" width="14" height="13.5" fill="#fff" stroke="#333"/><rect x="0" y="0" width="15" height="2.5" fill="#333"/><rect x="1" y="9" width="5" height="4.5" fill="#eaeaea"/><path d="M3 6h4M3 9h3" stroke="#333"/><rect x="8.5" y="5.5" width="4" height="2" fill="none" stroke="#d88a1c"/><rect x="8.5" y="9" width="4" height="2" fill="none" stroke="#d88a1c"/><path d="M8 12.5h5" stroke="#d88a1c"/></svg>
<svg class="a" style="left:265px;top:322px;" width="6" height="4" viewBox="0 0 6 4"><path d="M0 0h5.5L2.75 3.5z" fill="#111"/></svg>
<svg class="a" style="left:278px;top:316px;" width="15" height="15" viewBox="0 0 15 15"><rect x="0.5" y="0.5" width="14" height="14" rx="1" fill="#3b4fb8"/><rect x="3" y="1" width="9" height="6" fill="#e8ecf8"/><rect x="4" y="10" width="7" height="4.5" fill="#c9cfe6"/><rect x="5" y="11" width="2" height="2.5" fill="#3b4fb8"/></svg>
<div class="a" style="left:299px;top:317px;width:1px;height:14px;background:#c9c9c9"></div>
<svg class="a" style="left:307px;top:316px;" width="12" height="16" viewBox="0 0 12 16"><circle cx="3" cy="12" r="2.3" fill="none" stroke="#c4c4c4" stroke-width="1.4"/><circle cx="9" cy="12" r="2.3" fill="none" stroke="#c4c4c4" stroke-width="1.4"/><path d="M4 10L9 1M8 10L3 1" stroke="#c4c4c4" stroke-width="1.4"/></svg>
<svg class="a" style="left:329px;top:317px;" width="16" height="14" viewBox="0 0 16 14"><rect x="0.5" y="0.5" width="8" height="9" fill="#f4f4f4" stroke="#c4c4c4"/><rect x="5.5" y="4.5" width="9" height="9" fill="#f4f4f4" stroke="#c4c4c4"/><path d="M7 7h6M7 9h6M7 11h6" stroke="#c4c4c4"/></svg>
<svg class="a" style="left:352px;top:316px;" width="17" height="16" viewBox="0 0 17 16"><rect x="0.5" y="2.5" width="10" height="12" fill="#e8e8e8" stroke="#c4c4c4"/><rect x="3" y="0.5" width="5" height="3" fill="#e8e8e8" stroke="#c4c4c4"/><rect x="6.5" y="6.5" width="9" height="9" fill="#f4f4f4" stroke="#c4c4c4"/><path d="M8 9h6M8 11h6M8 13h6" stroke="#c4c4c4"/></svg>
<svg class="a" style="left:374px;top:316px;" width="17" height="16" viewBox="0 0 17 16"><rect x="1.5" y="6.5" width="5" height="8" fill="#ececec" stroke="#c4c4c4"/><rect x="10.5" y="6.5" width="5" height="8" fill="#ececec" stroke="#c4c4c4"/><rect x="2.5" y="1.5" width="3" height="5" fill="#ececec" stroke="#c4c4c4"/><rect x="11.5" y="1.5" width="3" height="5" fill="#ececec" stroke="#c4c4c4"/><rect x="6" y="7" width="5" height="3" fill="#c4c4c4"/></svg>
<div class="a" style="left:397px;top:317px;width:1px;height:14px;background:#c9c9c9"></div>
<svg class="a" style="left:405px;top:317px;" width="13" height="14" viewBox="0 0 13 14"><path d="M3 4h5a4 4 0 0 1 0 8H5" fill="none" stroke="#c4c4c4" stroke-width="2.2"/><path d="M0.5 4L4 0.5v7z" fill="#c4c4c4"/></svg>
<svg class="a" style="left:428px;top:317px;" width="13" height="14" viewBox="0 0 13 14"><path d="M10 4H5a4 4 0 0 0 0 8h3" fill="none" stroke="#c4c4c4" stroke-width="2.2"/><path d="M12.5 4L9 0.5v7z" fill="#c4c4c4"/></svg>
<div class="a" style="left:450px;top:317px;width:1px;height:14px;background:#c9c9c9"></div>
<svg class="a" style="left:461px;top:319px;" width="7" height="10" viewBox="0 0 7 10"><path d="M0.5 0.5v9l6-4.5z" fill="#1f9a2a"/></svg>
<div class="a" style="left:483px;top:319px;width:2px;height:9px;background:#2d5fcc"></div>
<div class="a" style="left:487px;top:319px;width:2px;height:9px;background:#2d5fcc"></div>
<div class="a" style="left:505px;top:320px;width:9px;height:9px;background:linear-gradient(135deg,#7a9ef0,#2a4fc0);border:1px solid #2a47a8"></div>
<svg class="a" style="left:524px;top:315px;" width="18" height="17" viewBox="0 0 18 17"><path d="M1 1v15h14z" fill="#2f6fd1"/><path d="M4 8v5h5z" fill="#f5f5f5"/><path d="M6 12L15 3l2 2-9 9-3 1z" fill="#e8a030"/><path d="M15 3l2 2" stroke="#c33" stroke-width="2"/><rect x="2" y="13" width="15" height="3" fill="#e9c046" stroke="#a07a10" stroke-width="0.6"/></svg>
<div class="a" style="left:547px;top:317px;width:1px;height:14px;background:#c9c9c9"></div>
<svg class="a" style="left:553px;top:315px;" width="18" height="17" viewBox="0 0 18 17"><path d="M2 4h8l3 3-8 1z" fill="#6aa6e8" stroke="#2a5aa8"/><path d="M1 9h9l3 3H4z" fill="#6aa6e8" stroke="#2a5aa8"/><path d="M2 13h10l3 2H3z" fill="#b9c8e0" stroke="#4a5a80"/><path d="M13 1l2 3M14 9l2 3" stroke="#e8b020" stroke-width="1.6"/><circle cx="14" cy="7" r="1.6" fill="#e02020"/></svg>
<svg class="a" style="left:576px;top:315px;" width="18" height="17" viewBox="0 0 18 17"><rect x="1.5" y="6.5" width="12" height="10" fill="#fff" stroke="#445"/><path d="M3 10h5M3 12h5M3 14h5" stroke="#6a8ac0"/><path d="M4 7l5-5 6 4-3 3z" fill="#e0b040" stroke="#806010" stroke-width="0.6"/><path d="M13 4l4-2v6z" fill="#2aa84a"/></svg>
<svg class="a" style="left:599px;top:315px;" width="18" height="17" viewBox="0 0 18 17"><rect x="3.5" y="8.5" width="11" height="7" fill="#f0c848" stroke="#8a6a10"/><path d="M3 8l3-3h9l-1 3" fill="#f8dc78" stroke="#8a6a10" stroke-width="0.8"/><circle cx="3" cy="3" r="2" fill="#3a5ad0"/><path d="M8 4l3-2v4z" fill="#2aa84a"/><rect x="13" y="0.5" width="4" height="4" fill="#e02020"/></svg>
<svg class="a" style="left:625px;top:317px;" width="14" height="14" viewBox="0 0 14 14"><path d="M2 13l7-7M1 2l4 1 1 4-2 1-4-3zM12 13L5 6" stroke="#c4c4c4" stroke-width="2" fill="none"/><path d="M9 1l4 4-2 2-4-4z" fill="#c4c4c4"/></svg>
<div class="a" style="left:645px;top:317px;width:1px;height:14px;background:#c9c9c9"></div>
<svg class="a" style="left:651px;top:315px;" width="18" height="18" viewBox="0 0 18 18"><circle cx="9" cy="9" r="8.3" fill="#3d74cf" stroke="#2a56a8"/><circle cx="9" cy="7" r="7" fill="#5a92e6" opacity="0.6"/><text x="9" y="14" text-anchor="middle" font-family="Liberation Sans" font-weight="bold" font-size="13" fill="#fff">?</text></svg>
<div class="a" style="left:674px;top:317px;width:1px;height:14px;background:#c9c9c9"></div>
<div class="a" style="left:678px;top:313px;width:218px;height:24px;background:#efefef;border-radius:0 4px 4px 0"></div>
<div class="a" style="left:885px;top:313px;width:11px;height:24px;background:linear-gradient(#c4c4c4,#a4a4a4);border-radius:0 4px 4px 0"></div>
<svg class="a" style="left:887px;top:326px;" width="7" height="7" viewBox="0 0 7 7"><path d="M0.5 0.5h6" stroke="#222"/><path d="M0.5 2.5h6L3.5 6z" fill="#222"/></svg>
<div class="a" style="left:393px;top:337px;width:842px;height:542px;background:#ababab;border-left:2px solid #787878;border-top:2px solid #787878"></div>
<div class="a" style="left:207px;top:338px;width:187px;height:541px;background:#f0f0f0"></div>
<div class="a" style="left:387px;top:338px;width:6px;height:541px;background:#efefef"></div>
<div class="a" style="left:207px;top:337px;width:180px;height:22px;background:#bfcddb"></div>
<div class="t" style="left:208px;top:339px;font-size:11px;color:#111;">?? - VBAProject</div>
<div class="a" style="left:366px;top:338px;width:20px;height:20px;background:#fbfbfb;border:1px solid;border-color:#fff #6f6f6f #6f6f6f #fff;box-shadow:inset -1px -1px 0 #b5b5b5, 0 0 0 0.5px #c8c8c8"></div>
<svg class="a" style="left:370px;top:342px;" width="12" height="12" viewBox="0 0 12 12"><path d="M1 1l10 10M11 1L1 11" stroke="#000" stroke-width="2"/></svg>
<div class="a" style="left:207px;top:360px;width:180px;height:26px;background:linear-gradient(#fafafa,#ececec)"></div>
<svg class="a" style="left:215px;top:366px;" width="16" height="14" viewBox="0 0 16 14"><rect x="0.5" y="0.5" width="14" height="12" fill="#fff" stroke="#4a6fb0"/><rect x="0" y="0" width="15" height="3" fill="#6a90d0"/><path d="M3 6h3M3 9h3" stroke="#4a6fb0"/><path d="M8 6h4M8 9h4" stroke="#e86a3a"/></svg>
<svg class="a" style="left:237px;top:366px;" width="16" height="14" viewBox="0 0 16 14"><rect x="0.5" y="0.5" width="14" height="12" fill="#fff" stroke="#4a6fb0"/><rect x="0" y="0" width="15" height="3" fill="#6a90d0"/><path d="M3 6h3M3 9h3" stroke="#555"/><rect x="7.5" y="5.5" width="5" height="2" fill="none" stroke="#555"/><rect x="7.5" y="8.5" width="5" height="2" fill="none" stroke="#555"/></svg>
<div class="a" style="left:260px;top:365px;width:1px;height:14px;background:#c9c9c9"></div>
<div class="a" style="left:264px;top:362px;width:24px;height:23px;background:#dbe8f6;border:1px solid #3a8ae0"></div>
<svg class="a" style="left:267px;top:366px;" width="17" height="14" viewBox="0 0 17 14"><path d="M0.5 2.5h6l2 2h8v9h-16z" fill="#f2d070" stroke="#b08a20"/><path d="M0.5 5.5h16v8h-16z" fill="#f6d878" stroke="#b08a20"/></svg>
<div class="a" style="left:375px;top:361px;width:12px;height:25px;background:linear-gradient(#cfcfcf,#a2a2a2);border-radius:4px 0 0 4px"></div>
<svg class="a" style="left:377px;top:374px;" width="8" height="8" viewBox="0 0 8 8"><path d="M1 1h6" stroke="#222"/><path d="M1 3h6L4 7z" fill="#222"/></svg>
<div class="a" style="left:208px;top:389px;width:178px;height:148px;background:#fff;border-left:1px solid #a0a0a0;border-top:1px solid #a0a0a0;border-right:1px solid #e3e3e3;border-bottom:1px solid #e3e3e3"></div>
<div class="a" style="left:216px;top:396px;width:9px;height:9px;background:#fafafa;border:1px solid #999"></div>
<div class="a" style="left:218px;top:400px;width:5px;height:1px;background:#3a5ad0"></div>
<svg class="a" style="left:225px;top:400px;" width="6" height="1" viewBox="0 0 6 1"><path d="M0 0.5h6" stroke="#888" stroke-dasharray="1 1"/></svg>
<svg class="a" style="left:231px;top:389px;" width="18" height="17" viewBox="0 0 18 17"><path d="M2 10l5-3 8 2-5 4z" fill="#fff" stroke="#222"/><path d="M4 4l4 2v5l-4-2z" fill="#3ad0e0" stroke="#222" stroke-width="0.8"/><path d="M9 4l4-2v5l-4 2z" fill="#3ad0e0" stroke="#222" stroke-width="0.8"/><circle cx="14" cy="2" r="1.6" fill="#2ad040"/><circle cx="11" cy="8" r="1.4" fill="#e040c0"/><path d="M1 12l8 4 8-4" fill="none" stroke="#3ad0e0" stroke-width="1.2"/></svg>
<div class="t" style="left:252px;top:391px;font-size:12.6px;color:#000;font-weight:bold;width:133px;overflow:hidden;letter-spacing:-0.1px">VBAProject (helloworl</div>
<svg class="a" style="left:239px;top:405px;" width="1" height="8" viewBox="0 0 1 8"><path d="M0.5 0v8" stroke="#888" stroke-dasharray="1 1"/></svg>
<div class="a" style="left:235px;top:412px;width:9px;height:9px;background:#fafafa;border:1px solid #999"></div>
<div class="a" style="left:237px;top:416px;width:5px;height:1px;background:#3a5ad0"></div>
<svg class="a" style="left:244px;top:416px;" width="7" height="1" viewBox="0 0 7 1"><path d="M0 0.5h7" stroke="#888" stroke-dasharray="1 1"/></svg>
<svg class="a" style="left:251px;top:407px;" width="16" height="14" viewBox="0 0 16 14"><path d="M0.5 2.5h5l2 2h7v9h-14z" fill="#fff" stroke="#666"/><path d="M1.5 6.5h14l-2 7h-13z" fill="#f0e060" stroke="#666"/></svg>
<div class="t" style="left:271px;top:408px;font-size:12px;color:#111;">Microsoft Excel ??</div>
<svg class="a" style="left:258px;top:421px;" width="1" height="26" viewBox="0 0 1 26"><path d="M0.5 0v26" stroke="#888" stroke-dasharray="1 1"/></svg>
<svg class="a" style="left:259px;top:430px;" width="9" height="1" viewBox="0 0 9 1"><path d="M0 0.5h9" stroke="#888" stroke-dasharray="1 1"/></svg>
<svg class="a" style="left:259px;top:446px;" width="9" height="1" viewBox="0 0 9 1"><path d="M0 0.5h9" stroke="#888" stroke-dasharray="1 1"/></svg>
<svg class="a" style="left:267px;top:421px;" width="18" height="17" viewBox="0 0 18 17"><path d="M5.5 1.5h7l4 4v10.5h-11z" fill="#fff" stroke="#111"/><path d="M12.5 1.5v4h4" fill="none" stroke="#111"/><path d="M2 6l8 8M10 6l-8 8" stroke="#2a8a3a" stroke-width="2.6"/><path d="M3 6.5l6 6" stroke="#8fd08f" stroke-width="0.8" stroke-dasharray="1 1"/></svg>
<div class="t" style="left:291px;top:424px;font-size:12px;color:#111;">ThisWorkbook</div>
<div class="a" style="left:288px;top:438px;width:98px;height:16px;background:#ececec"></div>
<svg class="a" style="left:269px;top:437px;" width="18" height="17" viewBox="0 0 18 17"><path d="M5.5 1.5h7l4 4v10.5h-11z" fill="#fff" stroke="#111"/><path d="M12.5 1.5v4h4" fill="none" stroke="#111"/><rect x="1.5" y="4.5" width="9" height="8" fill="#fff" stroke="#111"/><path d="M1.5 7h9M1.5 10h9M4.5 4.5v8M7.5 4.5v8" stroke="#111" stroke-width="1"/></svg>
<div class="t" style="left:290px;top:440px;font-size:12px;color:#111;">Worksheet___1 (</div>
<div class="a" style="left:208px;top:519px;width:178px;height:17px;background:#f0f0f0"></div>
<svg class="a" style="left:214px;top:523px;" width="6" height="9" viewBox="0 0 6 9"><path d="M5 1L1.5 4.5 5 8" fill="none" stroke="#666" stroke-width="1.4"/></svg>
<div class="a" style="left:226px;top:520px;width:112px;height:15px;background:#cdcdcd"></div>
<svg class="a" style="left:373px;top:523px;" width="6" height="9" viewBox="0 0 6 9"><path d="M1 1l3.5 3.5L1 8" fill="none" stroke="#666" stroke-width="1.4"/></svg>
<div class="a" style="left:207px;top:544px;width:180px;height:22px;background:#bfcddb"></div>
<div class="t" style="left:208px;top:546px;font-size:11px;color:#111;">?? - Worksheet___1</div>
<div class="a" style="left:366px;top:545px;width:20px;height:20px;background:#fbfbfb;border:1px solid;border-color:#fff #6f6f6f #6f6f6f #fff;box-shadow:inset -1px -1px 0 #b5b5b5, 0 0 0 0.5px #c8c8c8"></div>
<svg class="a" style="left:370px;top:549px;" width="12" height="12" viewBox="0 0 12 12"><path d="M1 1l10 10M11 1L1 11" stroke="#000" stroke-width="2"/></svg>
<div class="a" style="left:207px;top:570px;width:178px;height:20px;background:#fff;border:1px solid #7a7a7a"></div>
<div class="t" style="left:211px;top:575px;font-size:12px;color:#111;"><b>Worksheet__</b>  Worksheet</div>
<svg class="a" style="left:370px;top:577px;" width="10" height="6" viewBox="0 0 10 6"><path d="M1 1l4 4 4-4" fill="none" stroke="#555"/></svg>
<div class="a" style="left:207px;top:592px;width:46px;height:23px;background:#fff;border:1px solid #e0e0e0;border-bottom:none"></div>
<div class="a" style="left:252px;top:594px;width:39px;height:20px;background:#f0f0f0;border:1px solid #dcdcdc;border-bottom:none"></div>
<div class="t" style="left:215px;top:597px;font-size:12px;color:#111;">????</div>
<div class="t" style="left:257px;top:599px;font-size:12px;color:#111;">????</div>
<div class="a" style="left:211px;top:615px;width:173px;height:263px;background:#fff;border:1px solid #a9a9a9"></div>
<div class="a" style="left:213px;top:617px;width:169px;height:259px;border:1px solid #6d6d6d"></div>
<div class="a" style="left:214px;top:618px;width:86px;height:16px;background:#f0f0f0"></div>
<div class="a" style="left:214px;top:634px;width:167px;height:1px;background:#d4d4d4"></div>
<div class="t" style="left:215px;top:619px;width:85px;height:15px;overflow:hidden;font-size:12px;line-height:16px;color:#111">(Name)</div>
<div class="t" style="left:303px;top:619px;width:78px;height:15px;overflow:hidden;font-size:12px;line-height:16px;color:#7a7a7a">Worksheet___</div>
<div class="a" style="left:214px;top:651px;width:167px;height:1px;background:#d4d4d4"></div>
<div class="t" style="left:215px;top:636px;width:85px;height:15px;overflow:hidden;font-size:12px;line-height:16px;color:#111">DisplayPageBreaks</div>
<div class="t" style="left:303px;top:636px;width:78px;height:15px;overflow:hidden;font-size:12px;line-height:16px;color:#7a7a7a">False</div>
<div class="a" style="left:214px;top:668px;width:167px;height:1px;background:#d4d4d4"></div>
<div class="t" style="left:215px;top:653px;width:85px;height:15px;overflow:hidden;font-size:12px;line-height:16px;color:#111">DisplayRightToLeft</div>
<div class="t" style="left:303px;top:653px;width:78px;height:15px;overflow:hidden;font-size:12px;line-height:16px;color:#7a7a7a">False</div>
<div class="a" style="left:214px;top:685px;width:167px;height:1px;background:#d4d4d4"></div>
<div class="t" style="left:215px;top:670px;width:85px;height:15px;overflow:hidden;font-size:12px;line-height:16px;color:#111">EnableAutoFilter</div>
<div class="t" style="left:303px;top:670px;width:78px;height:15px;overflow:hidden;font-size:12px;line-height:16px;color:#7a7a7a">False</div>
<div class="a" style="left:214px;top:702px;width:167px;height:1px;background:#d4d4d4"></div>
<div class="t" style="left:215px;top:687px;width:85px;height:15px;overflow:hidden;font-size:12px;line-height:16px;color:#111">EnableCalculation</div>
<div class="t" style="left:303px;top:687px;width:78px;height:15px;overflow:hidden;font-size:12px;line-height:16px;color:#7a7a7a">True</div>
<div class="a" style="left:214px;top:719px;width:167px;height:1px;background:#d4d4d4"></div>
<div class="t" style="left:215px;top:704px;width:85px;height:15px;overflow:hidden;font-size:12px;line-height:16px;color:#111">EnableFormatConditionsCalculation</div>
<div class="t" style="left:303px;top:704px;width:78px;height:15px;overflow:hidden;font-size:12px;line-height:16px;color:#7a7a7a">True</div>
<div class="a" style="left:214px;top:736px;width:167px;height:1px;background:#d4d4d4"></div>
<div class="t" style="left:215px;top:721px;width:85px;height:15px;overflow:hidden;font-size:12px;line-height:16px;color:#111">EnableOutlining</div>
<div class="t" style="left:303px;top:721px;width:78px;height:15px;overflow:hidden;font-size:12px;line-height:16px;color:#7a7a7a">False</div>
<div class="a" style="left:214px;top:753px;width:167px;height:1px;background:#d4d4d4"></div>
<div class="t" style="left:215px;top:738px;width:85px;height:15px;overflow:hidden;font-size:12px;line-height:16px;color:#111">EnablePivotTable</div>
<div class="t" style="left:303px;top:738px;width:78px;height:15px;overflow:hidden;font-size:12px;line-height:16px;color:#7a7a7a">False</div>
<div class="a" style="left:214px;top:770px;width:167px;height:1px;background:#d4d4d4"></div>
<div class="t" style="left:215px;top:755px;width:85px;height:15px;overflow:hidden;font-size:12px;line-height:16px;color:#111">EnableSelection</div>
<div class="t" style="left:303px;top:755px;width:78px;height:15px;overflow:hidden;font-size:12px;line-height:16px;color:#7a7a7a">0 - xlNoRestrictions</div>
<div class="a" style="left:214px;top:787px;width:167px;height:1px;background:#d4d4d4"></div>
<div class="t" style="left:215px;top:772px;width:85px;height:15px;overflow:hidden;font-size:12px;line-height:16px;color:#111">Name</div>
<div class="t" style="left:303px;top:772px;width:78px;height:15px;overflow:hidden;font-size:12px;line-height:16px;color:#7a7a7a">???1</div>
<div class="a" style="left:214px;top:804px;width:167px;height:1px;background:#d4d4d4"></div>
<div class="t" style="left:215px;top:789px;width:85px;height:15px;overflow:hidden;font-size:12px;line-height:16px;color:#111">ScrollArea</div>
<div class="t" style="left:303px;top:789px;width:78px;height:15px;overflow:hidden;font-size:12px;line-height:16px;color:#7a7a7a"></div>
<div class="a" style="left:214px;top:821px;width:167px;height:1px;background:#d4d4d4"></div>
<div class="t" style="left:215px;top:806px;width:85px;height:15px;overflow:hidden;font-size:12px;line-height:16px;color:#111">StandardWidth</div>
<div class="t" style="left:303px;top:806px;width:78px;height:15px;overflow:hidden;font-size:12px;line-height:16px;color:#7a7a7a">8.38</div>
<div class="a" style="left:214px;top:838px;width:167px;height:1px;background:#d4d4d4"></div>
<div class="t" style="left:215px;top:823px;width:85px;height:15px;overflow:hidden;font-size:12px;line-height:16px;color:#111">Visible</div>
<div class="t" style="left:303px;top:823px;width:78px;height:15px;overflow:hidden;font-size:12px;line-height:16px;color:#7a7a7a">-1 - xlSheetVisible</div>
<div class="a" style="left:300px;top:618px;width:1px;height:221px;background:#d4d4d4"></div>
<svg class="a" style="left:43px;top:127px;filter:drop-shadow(1px 1px 1px rgba(0,0,0,0.35));z-index:50" width="46" height="54" viewBox="0 0 46 54"><path d="M6.0 4.0 L22.4 12.0 A18 18 0 1 1 5.7 22.3 Z" fill="#ef3b3b"/><path d="M20.5 21H24.799999999999997V38.5H20.5V26.19999999999999L16.200000000000003 28.599999999999994V24.400000000000006Z" fill="#fff"/></svg>
<svg class="a" style="left:576px;top:222px;filter:drop-shadow(1px 1px 1px rgba(0,0,0,0.35));z-index:50" width="52" height="49" viewBox="0 0 52 49"><path d="M4.0 43.0 L10.2 24.6 A18 18 0 1 1 23.1 39.3 Z" fill="#ef3b3b"/><text x="28.0" y="31.0" text-anchor="middle" font-family="Liberation Sans" font-weight="bold" font-size="25" fill="#fff">2</text></svg>
<div class="a" style="left:0;top:0;width:1295px;height:952px;border:1px solid #8a8288;z-index:100"></div></body></html>
